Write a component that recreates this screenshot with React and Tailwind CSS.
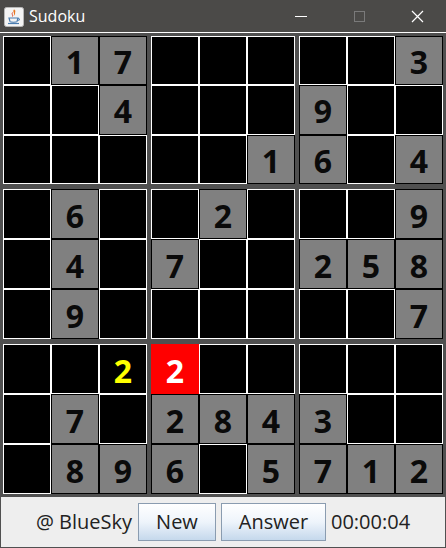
import React from 'react';

// 0 = empty, 'y' prefix = user entry, 'r' prefix = conflict
const board = [
  [0, 1, 7, 0, 0, 0, 0, 0, 3],
  [0, 0, 4, 0, 0, 0, 9, 0, 0],
  [0, 0, 0, 0, 0, 1, 6, 0, 4],
  [0, 6, 0, 0, 2, 0, 0, 0, 9],
  [0, 4, 0, 7, 0, 0, 2, 5, 8],
  [0, 9, 0, 0, 0, 0, 0, 0, 7],
  [0, 0, 'y2', 'r2', 0, 0, 0, 0, 0],
  [0, 7, 0, 2, 8, 4, 3, 0, 0],
  [0, 8, 9, 6, 0, 5, 7, 1, 2],
];

const Cell = ({ value }) => {
  if (value === 0) {
    return <div className="bg-black border border-white" />;
  }
  if (typeof value === 'string' && value[0] === 'y') {
    return (
      <div className="bg-black border border-white flex items-center justify-center text-[#ffff00] text-[32px] font-bold leading-none pt-[3px]">
        {value.slice(1)}
      </div>
    );
  }
  if (typeof value === 'string' && value[0] === 'r') {
    return (
      <div className="bg-[#ff0000] border border-[#ff0000] flex items-center justify-center text-white text-[32px] font-bold leading-none pt-[3px]">
        {value.slice(1)}
      </div>
    );
  }
  return (
    <div className="bg-[#808080] border border-black flex items-center justify-center text-[#0a0a0a] text-[32px] font-bold leading-none pt-[3px]">
      {value}
    </div>
  );
};

const Block = ({ br, bc }) => {
  const cells = [];
  for (let r = 0; r < 3; r++) {
    for (let c = 0; c < 3; c++) {
      cells.push(<Cell key={`${r}-${c}`} value={board[br * 3 + r][bc * 3 + c]} />);
    }
  }
  return <div className="grid grid-cols-3 grid-rows-3 w-[144px] h-full">{cells}</div>;
};

const JavaIcon = () => (
  <svg width="20" height="20" viewBox="0 0 20 20">
    <rect x="0.5" y="0.5" width="19" height="19" rx="2" fill="#f4f4f4" stroke="#b8b8b8" />
    <path d="M10 2.5 C8 5 11.5 6 9.5 9 C12.5 7 10 5 12 3.5 C10.5 4.5 11.5 3 10 2.5 Z" fill="#e8761e" />
    <path d="M8.5 5.5 C7.5 7 9 8 8.5 9.5" stroke="#d9452b" strokeWidth="1" fill="none" />
    <path d="M5 11 L14 11 L13 14.5 C12.5 15.5 6.5 15.5 6 14.5 Z" fill="none" stroke="#4a7db0" strokeWidth="1.2" />
    <path d="M14 11.5 C16 11.5 16 13.5 13.5 13.5" stroke="#4a7db0" strokeWidth="1.1" fill="none" />
    <path d="M4 16.5 L15 16.5" stroke="#4a7db0" strokeWidth="1.2" />
  </svg>
);

export default function App() {
  return (
    <div className="w-[446px] h-[548px] bg-[#505050] flex flex-col font-['Open_Sans','Noto_Sans',sans-serif] overflow-hidden">
      {/* title bar */}
      <div className="h-[32px] shrink-0 bg-[#4b4a48] flex items-center">
        <div className="ml-[4px] mt-[1px]"><JavaIcon /></div>
        <span className="ml-[5px] text-white text-[16px] leading-none">Sudoku</span>
        <div className="ml-auto flex items-center h-full">
          <div className="w-[58px] h-full flex items-center justify-center">
            <div className="w-[12px] h-px bg-white" />
          </div>
          <div className="w-[58px] h-full flex items-center justify-center">
            <div className="w-[11px] h-[11px] border border-[#7a7a7a]" />
          </div>
          <div className="w-[58px] h-full flex items-center justify-center">
            <svg width="13" height="13" viewBox="0 0 13 13">
              <path d="M1 1 L12 12 M12 1 L1 12" stroke="#ffffff" strokeWidth="1.2" />
            </svg>
          </div>
        </div>
      </div>
      <div className="h-px shrink-0 bg-white" />

      {/* board */}
      <div className="px-[3px] py-[3px] flex flex-col gap-[5px] shrink-0">
        {[0, 1, 2].map((br) => (
          <div key={br} className={`flex gap-[4px] ${br === 0 ? 'h-[148px]' : 'h-[150px]'}`}>
            {[0, 1, 2].map((bc) => (
              <Block key={bc} br={br} bc={bc} />
            ))}
          </div>
        ))}
      </div>

      {/* bottom bar */}
      <div className="flex-1 mx-px mb-px bg-[#eeeeee] flex items-center justify-center gap-[5px] text-[20px] text-[#222]">
        <span className="mr-[1px]">@ BlueSky</span>
        <button className="w-[78px] h-[38px] border border-[#8a9cb0] bg-gradient-to-b from-white via-[#eef4fb] to-[#c5d8ec] text-[#222]">
          New
        </button>
        <button className="w-[105px] h-[38px] border border-[#8a9cb0] bg-gradient-to-b from-white via-[#eef4fb] to-[#c5d8ec] text-[#222]">
          Answer
        </button>
        <span>00:00:04</span>
      </div>
    </div>
  );
}
